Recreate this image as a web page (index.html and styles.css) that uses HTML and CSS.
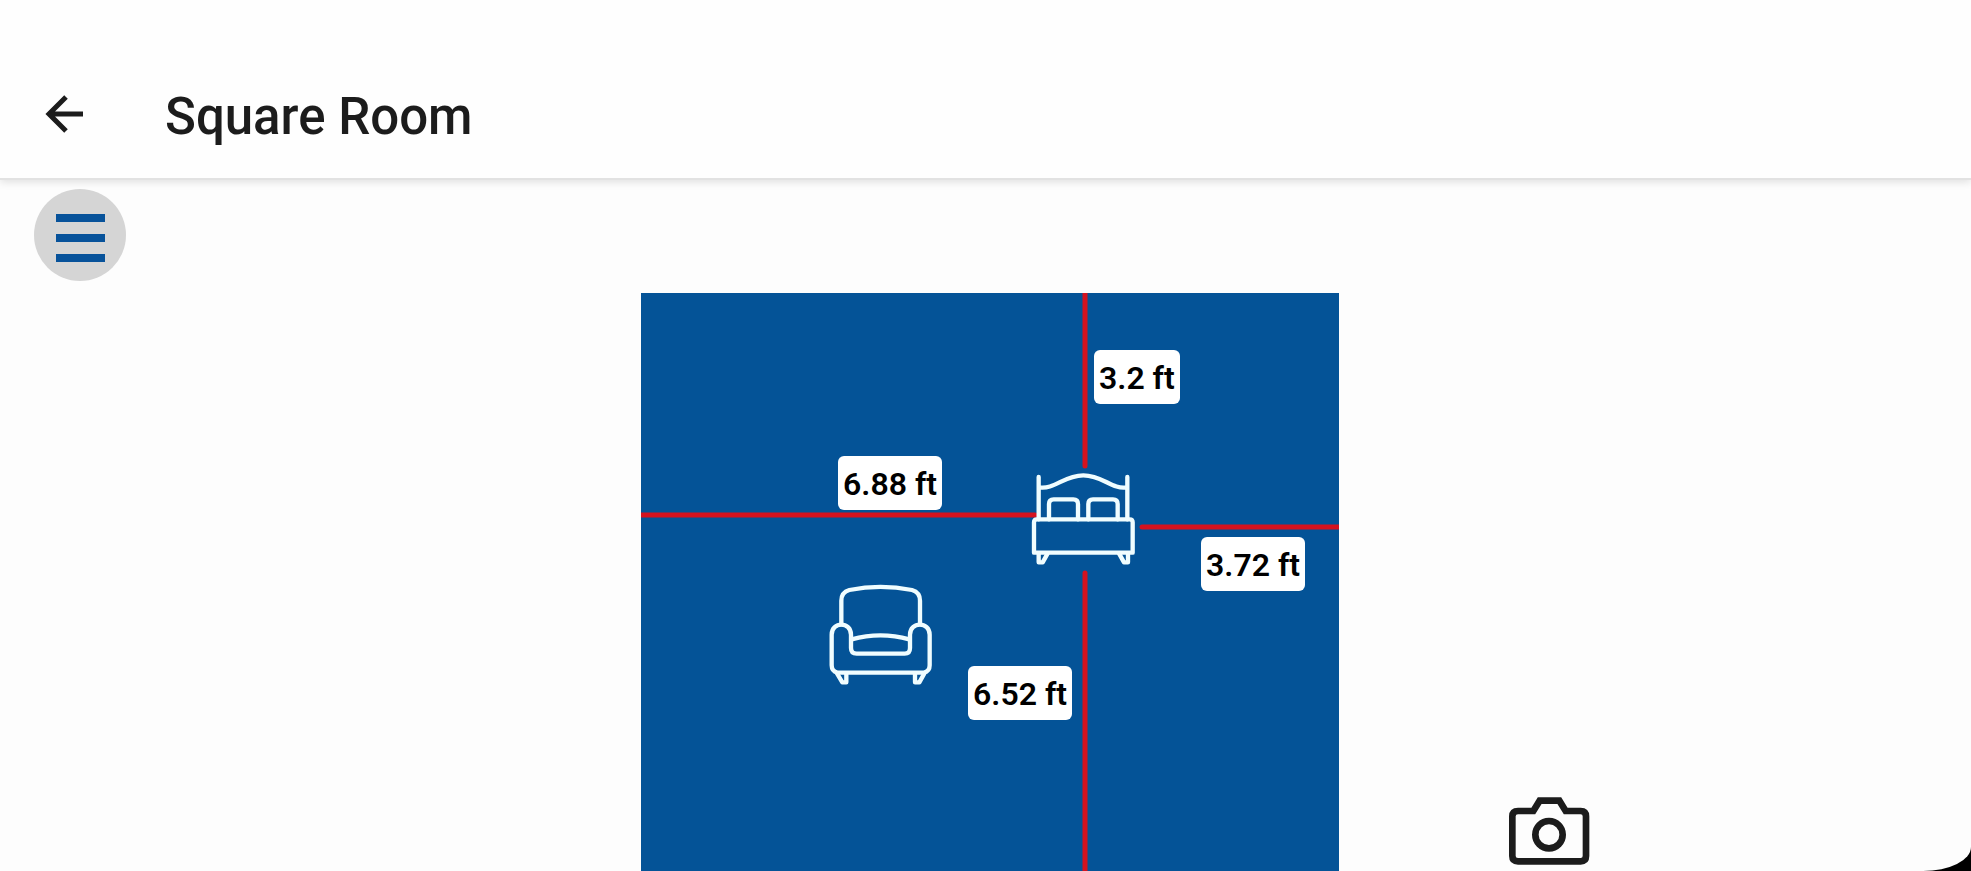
FILE: index.html
```html
<!DOCTYPE html>
<html lang="en">
<head>
<meta charset="utf-8">
<meta name="viewport" content="width=device-width, initial-scale=1">
<title>Square Room</title>
<link rel="stylesheet" href="styles.css">
</head>
<body>
<div class="screen">
  <header class="app-bar">
    <button class="back" type="button" aria-label="Back">
      <svg width="40" height="40" viewBox="0 0 40 40"><path d="M38 20H5M21 3L4 20l17 17" fill="none" stroke="currentColor" stroke-width="5"/></svg>
    </button>
    <h1 class="title">Square Room</h1>
  </header>
  <nav class="toolbar">
    <button class="menu" type="button" aria-label="Menu">
      <svg width="52" height="52" viewBox="0 0 52 52"><path d="M2 6h49M2 26h49M2 46h49" fill="none" stroke="currentColor" stroke-width="8"/></svg>
    </button>
  </nav>
  <main class="stage">
    <section class="room" aria-label="Room plan">
      <svg class="guides" width="100%" height="100%">
        <line x1="444" y1="-4" x2="444" y2="173"/>
        <line x1="444" y1="280" x2="444" y2="110%"/>
        <line x1="-4" y1="222" x2="394" y2="222"/>
        <line x1="501" y1="234" x2="110%" y2="234"/>
      </svg>
      <svg class="item bed" width="110" height="100" viewBox="90 90 330 300">
        <path d="M116 111V238M382 111V238M116 142C165 150 190 106 250 106S335 150 382 142"/>
        <path d="M147 238V192Q147 178 161 178H220Q234 178 234 192V238M265 238V192Q265 178 279 178H339Q353 178 353 192V238"/>
        <path d="M102 338V247Q102 238 111 238H389Q398 238 398 247V338Z"/>
        <path d="M116 340V367H128L143 340M384 340V367H372L357 340"/>
      </svg>
      <svg class="item chair" width="110" height="110" viewBox="45 60 330 330">
        <path d="M94 193V122Q94 97 118 90Q211 71 306 90Q330 97 330 122V193"/>
        <path d="M82 338Q65 334 65 316V224C65 184 123 184 123 224V264Q123 281 140 281H284Q300 281 300 264V224C300 184 359 184 359 224V316Q359 334 342 338Z"/>
        <path d="M125 238Q211 214 298 238M81 340L97 367H109V340M343 340L328 367H315V340"/>
      </svg>
      <span class="distance north">3.2 ft</span>
      <span class="distance west">6.88 ft</span>
      <span class="distance east">3.72 ft</span>
      <span class="distance south">6.52 ft</span>
    </section>
    <button class="camera" type="button" aria-label="Take photo">
      <svg width="90" height="75" viewBox="75 75 270 225">
        <path d="M114 120H160L179 89H238L257 120H302Q318 120 318 136V255Q318 271 302 271H114Q97 271 97 255V136Q97 120 114 120Z" fill="none" stroke="currentColor" stroke-width="20"/>
        <circle cx="207" cy="191" r="41" fill="none" stroke="currentColor" stroke-width="20"/>
      </svg>
    </button>
  </main>
</div>
</body>
</html>
```
FILE: styles.css
```css
* {
  box-sizing: border-box;
}

body {
  margin: 0;
  background: #000;
  font-family: Roboto, "Liberation Sans", sans-serif;
  color: #1c1c1c;
}

button {
  padding: 0;
  border: 0;
  background: none;
  color: inherit;
}

svg {
  display: block;
}

.screen {
  display: flex;
  flex-direction: column;
  min-height: 100vh;
  background: #fdfdfd;
  border-bottom-right-radius: 48px 24px;
  overflow: hidden;
}

.app-bar {
  display: flex;
  align-items: center;
  gap: 80px;
  padding: 86px 45px 30px;
  background: #fefefe;
  border-bottom: 2px solid #e2e2e2;
  box-shadow: 0 2px 8px rgba(0, 0, 0, 0.12);
}

.back {
  margin-bottom: 6px;
}

.title {
  margin: 0;
  font-size: 51px;
  font-weight: 500;
  line-height: 62px;
}

.toolbar {
  padding: 9px 34px 12px;
}

.menu {
  display: flex;
  align-items: center;
  justify-content: center;
  width: 92px;
  height: 92px;
  padding-top: 6px;
  border-radius: 50%;
  background: #d5d5d5;
  color: #07529a;
}

.stage {
  flex: 1;
  display: grid;
  grid-template-columns: 1fr 698px 1fr;
  padding-left: 9px;
}

.room {
  grid-column: 2;
  position: relative;
  min-height: 578px;
  background: #045397;
  overflow: hidden;
}

.guides {
  position: absolute;
  inset: 0;
  stroke: #d5121f;
  stroke-width: 5px;
  stroke-linecap: round;
}

.item {
  position: absolute;
  fill: none;
  stroke: #f0fdff;
  stroke-width: 13px;
  stroke-linecap: round;
  stroke-linejoin: round;
}

.bed {
  left: 389px;
  top: 177px;
}

.chair {
  left: 184px;
  top: 287px;
}

.distance {
  position: absolute;
  padding: 2px 5px 0;
  border-radius: 6px;
  background: #fff;
  color: #000;
  font-size: 32px;
  font-weight: 600;
  line-height: 52px;
  white-space: nowrap;
}

.north {
  left: 453px;
  top: 57px;
}

.west {
  left: 197px;
  top: 163px;
}

.east {
  left: 560px;
  top: 244px;
}

.south {
  left: 327px;
  top: 373px;
}

.camera {
  grid-column: 3;
  place-self: end start;
  margin-left: 166px;
}
```
